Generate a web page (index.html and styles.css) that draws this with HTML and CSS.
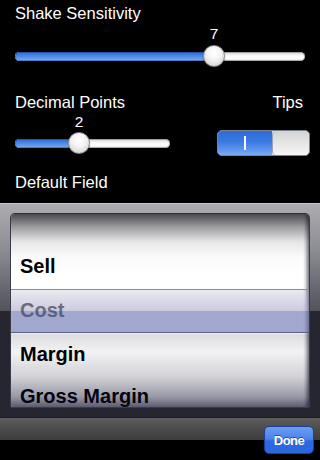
FILE: index.html
```html
<!DOCTYPE html>
<html>
<head>
<meta charset="utf-8">
<link rel="stylesheet" href="styles.css">
</head>
<body>
<div class="screen">
  <section class="settings">
    <div class="label first">Shake Sensitivity</div>
    <div class="slider-block wide">
      <div class="value"><span class="num" style="margin-left:188px">7</span></div>
      <div class="slider">
        <div class="track"><div class="fill" style="width:199px"></div></div>
        <div class="thumb" style="left:188px"></div>
      </div>
    </div>

    <div class="row">
      <div class="col-left">
        <div class="label">Decimal Points</div>
        <div class="value"><span class="num" style="margin-left:53px">2</span></div>
        <div class="slider">
          <div class="track"><div class="fill" style="width:64px"></div></div>
          <div class="thumb" style="left:53px"></div>
        </div>
      </div>
      <div class="col-right">
        <div class="label tips">Tips</div>
        <div class="switch">
          <div class="switch-on"><span class="on-mark"></span></div>
          <div class="switch-knob"></div>
        </div>
      </div>
    </div>

    <div class="label field">Default Field</div>
  </section>

  <div class="picker-frame">
    <div class="picker">
      <ul class="wheel">
        <li>Sell</li>
        <li class="dim">Cost</li>
        <li>Margin</li>
        <li class="last">Gross Margin</li>
      </ul>
      <div class="selection"></div>
    </div>
  </div>

  <div class="toolbar">
    <button class="done">Done</button>
  </div>
</div>
</body>
</html>
```
FILE: styles.css
```css
* { box-sizing: border-box; }
html, body {
  margin: 0;
  padding: 0;
  background: #000;
}
body {
  width: 320px;
  height: 460px;
  overflow: hidden;
  font-family: "Liberation Sans", Arial, Helvetica, sans-serif;
  color: #fff;
}
.screen {
  width: 320px;
  height: 460px;
  display: flex;
  flex-direction: column;
}
.settings {
  padding: 0 10px 0 15px;
}
.label {
  font-size: 16.5px;
  line-height: 19px;
  height: 19px;
  white-space: nowrap;
}
.label.first { margin-top: 4px; }
.value {
  font-size: 15.5px;
  line-height: 16px;
  height: 16px;
  margin-top: 3px;
}
.value .num {
  display: inline-block;
  width: 22px;
  text-align: center;
}
.slider {
  position: relative;
  height: 22px;
  margin-top: 3px;
  display: flex;
  align-items: center;
}
.wide .slider { margin-right: 5px; }
.track {
  width: 100%;
  height: 9px;
  border-radius: 5px;
  background: linear-gradient(to bottom, #c9c9c9 0, #f4f4f4 3px, #ffffff 6px, #e2e2e2 100%);
  box-shadow: inset 0 0 0 1px rgba(120,120,120,0.55);
  overflow: hidden;
}
.fill {
  height: 100%;
  border-radius: 5px 0 0 5px;
  background: linear-gradient(to bottom, #2f66cf 0, #4282e6 35%, #5592ea 60%, #80aff2 100%);
  box-shadow: inset 0 0 0 1px rgba(20,50,120,0.4);
}
.thumb {
  position: absolute;
  top: 0;
  width: 22px;
  height: 22px;
  border-radius: 50%;
  background: radial-gradient(circle at 50% 35%, #ffffff 0, #f4f4f4 40%, #d9d9d9 78%, #c4c4c4 100%);
  border: 1px solid #8c8c8c;
  box-shadow: 0 1px 1px rgba(0,0,0,0.5);
}

.row {
  display: flex;
  justify-content: space-between;
  margin-top: 26px;
}
.col-left { width: 155px; }
.col-left .value { margin-top: 2px; }
.col-left .slider { margin-top: 2px; }
.col-right {
  display: flex;
  flex-direction: column;
  align-items: flex-end;
}
.tips { padding-right: 7px; }
.switch {
  margin-top: 18px;
  width: 93px;
  height: 26px;
  display: flex;
  border-radius: 5px;
  overflow: hidden;
  border: 1px solid #7c8494;
  background: #e6e6e6;
}
.switch-on {
  width: 54px;
  height: 100%;
  background: linear-gradient(to bottom, #2e6bd8 0, #3b7ae2 45%, #5a93ec 75%, #7aabf4 100%);
  display: flex;
  align-items: center;
  justify-content: center;
}
.on-mark {
  display: block;
  width: 2px;
  height: 14px;
  background: #fff;
}
.switch-knob {
  flex: 1;
  height: 100%;
  border-left: 1px solid #9aa3b5;
  border-radius: 4px;
  background: linear-gradient(to bottom, #d2d2d2 0, #e2e2e2 40%, #f6f6f6 100%);
}

.field {
  margin-top: 17px;
}

.picker-frame {
  margin-top: 11px;
  height: 215px;
  border-top: 1px solid #c6c6ca;
  padding: 9px 10px 0;
  background: linear-gradient(to bottom, #acacb1 0, #8d8d94 45px, #66666f 85px, #53535c 107px, #262631 107px, #262631 100%);
}
.picker {
  position: relative;
  height: 195px;
  border-radius: 5px 5px 3px 3px;
  overflow: hidden;
  background: #ffffff;
  border: 1px solid #3a3a48;
  border-top-color: #2a2a30;
}
.picker::after {
  content: "";
  position: absolute;
  left: 0;
  right: 0;
  top: 0;
  bottom: 0;
  pointer-events: none;
  background:
    linear-gradient(to left, rgba(10,10,30,0.55) 0, rgba(10,10,30,0.1) 4px, rgba(0,0,0,0) 6px),
    linear-gradient(to bottom,
      rgba(20,20,25,0.77) 0,
      rgba(20,20,25,0.42) 13px,
      rgba(20,20,25,0.1) 28px,
      rgba(20,20,25,0.02) 43px,
      rgba(0,0,0,0) 60px,
      rgba(0,0,0,0) 119px,
      rgba(10,10,40,0.14) 120px,
      rgba(10,10,40,0.05) 138px,
      rgba(10,10,40,0.19) 163px,
      rgba(10,10,40,0.42) 183px,
      rgba(10,10,40,0.72) 195px);
}
.wheel {
  list-style: none;
  margin: 0;
  padding: 30px 0 0 9px;
}
.wheel li {
  height: 44px;
  line-height: 44px;
  font-size: 20px;
  font-weight: bold;
  color: #000;
  white-space: nowrap;
}
.wheel li.last {
  line-height: 40px;
  height: 40px;
}
.wheel li.dim { color: #4a4a4a; }
.selection {
  position: absolute;
  left: 0;
  right: 0;
  top: 75px;
  height: 44px;
  border-top: 1px solid #8a8a96;
  border-bottom: 1px solid #5c6084;
  background: linear-gradient(to bottom,
    rgba(150,150,190,0.2) 0,
    rgba(150,150,190,0.5) 21px,
    rgba(100,110,172,0.6) 21px,
    rgba(100,110,172,0.6) 100%);
  z-index: 2;
}

.toolbar {
  height: 43px;
  border-top: 1px solid #1c1c1c;
  background: linear-gradient(to bottom, #5e5e5e 0, #4c4c4c 11px, #3c3c3c 22px, #000 22px, #000 100%);
  display: flex;
  justify-content: flex-end;
  align-items: flex-start;
  padding: 8px 6px 0 0;
}
.done {
  width: 50px;
  height: 28px;
  margin: 0;
  padding: 0;
  border: 1px solid #1d3f96;
  border-radius: 5px;
  background: linear-gradient(to bottom, #6b9ef2 0, #4a85ec 45%, #2d69e0 55%, #2a66de 100%);
  color: #fff;
  font-family: "Liberation Sans", Arial, Helvetica, sans-serif;
  font-size: 13px;
  font-weight: bold;
  letter-spacing: -0.5px;
  text-shadow: 0 -1px 0 rgba(0,0,0,0.45);
}
```
